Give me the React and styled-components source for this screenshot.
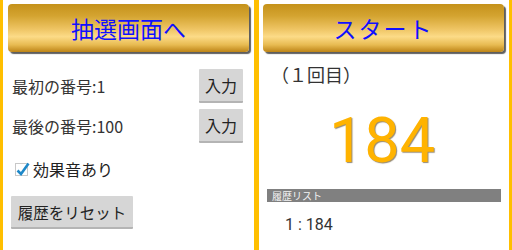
import React from 'react';
import styled, { createGlobalStyle } from 'styled-components';

const GlobalStyle = createGlobalStyle`
  html, body {
    margin: 0;
    padding: 0;
    background: #ffbf00;
  }
  body {
    font-family: Roboto, "Noto Sans CJK JP", sans-serif;
  }
`;

const Screen = styled.div`
  width: 512px;
  height: 250px;
  display: grid;
  grid-template-columns: 251px 250px;
  column-gap: 5px;
  padding: 0 3px;
  box-sizing: border-box;
  background: #ffbf00;
  overflow: hidden;
`;

const Panel = styled.div`
  background: #fff;
  display: flex;
  flex-direction: column;
  align-items: stretch;
  padding: ${(p) => p.$pad};
  box-sizing: border-box;
`;

const GoldButton = styled.button`
  height: 48px;
  border: none;
  border-radius: 4px;
  margin: 0;
  background: linear-gradient(
    to bottom,
    #c5921a 0%,
    #d4a431 25%,
    #eec463 52%,
    #fcdb87 68%,
    #e8bb52 85%,
    #bd8416 100%
  );
  box-shadow: 2px 2px 1px rgba(40, 40, 40, 0.75);
  color: #1010ff;
  font-family: "Noto Sans CJK JP", sans-serif;
  font-size: 23px;
  letter-spacing: ${(p) => p.$spacing || '0'};
  padding: 0;
  cursor: pointer;
`;

const Row = styled.div`
  display: flex;
  align-items: center;
  justify-content: space-between;
  height: 34px;
  margin-top: ${(p) => p.$top};
  padding: 0 6px 0 4px;
`;

const Label = styled.span`
  font-family: "Noto Sans CJK JP", sans-serif;
  font-size: 16px;
  color: #333;
`;

const GrayButton = styled.button`
  height: ${(p) => p.$h || '34px'};
  width: ${(p) => p.$w || '44px'};
  background: #d6d6d6;
  border: none;
  border-bottom: 2px solid #b4b4b4;
  border-radius: 1px;
  padding: 0;
  white-space: nowrap;
  font-family: "Noto Sans CJK JP", sans-serif;
  font-size: ${(p) => p.$fs || '16px'};
  color: #222;
  box-sizing: border-box;
`;

const CheckRow = styled.label`
  display: flex;
  align-items: center;
  gap: 5px;
  margin: 14px 0 0 7px;
  font-family: "Noto Sans CJK JP", sans-serif;
  font-size: 16px;
  color: #222;
`;

const Box = styled.span`
  width: 13px;
  height: 13px;
  border: 1px solid #c8c8c8;
  box-sizing: border-box;
  background: #fff;
  position: relative;
  display: inline-block;
`;

const Tick = styled.svg`
  position: absolute;
  left: 0;
  top: -3px;
`;

const ResetWrap = styled.div`
  margin: 15px 0 0 3px;
`;

const Count = styled.div`
  margin: 9px 0 0 8px;
  font-family: "Noto Sans CJK JP", sans-serif;
  font-size: 18px;
  color: #333;
`;

const BigNumber = styled.div`
  text-align: center;
  font-family: Roboto, sans-serif;
  font-size: 63px;
  line-height: 64px;
  color: #ffb300;
  margin-top: 22px;
  text-shadow: 1px 1px 1px rgba(60, 40, 0, 0.55);
  padding-right: 3px;
`;

const HistoryBar = styled.div`
  margin: 16px 3px 0 4px;
  height: 13px;
  background: #808080;
  color: #f4f4f4;
  font-family: "Noto Sans CJK JP", sans-serif;
  font-size: 10px;
  line-height: 13px;
  padding-left: 5px;
`;

const HistoryItem = styled.div`
  margin: 13px 0 0 22px;
  font-family: Roboto, sans-serif;
  font-size: 16px;
  color: #333;
`;

export default function App() {
  return (
    <>
      <GlobalStyle />
      <Screen>
        <Panel $pad="4px 5px 0 5px">
          <GoldButton>抽選画面へ</GoldButton>
          <Row $top="17px">
            <Label>最初の番号:1</Label>
            <GrayButton>入力</GrayButton>
          </Row>
          <Row $top="6px">
            <Label>最後の番号:100</Label>
            <GrayButton>入力</GrayButton>
          </Row>
          <CheckRow>
            <Box>
              <Tick width="14" height="16" viewBox="0 0 14 16">
                <path d="M1.5 9.5 L5 13 L12.5 2.5" fill="none" stroke="#1e88c8" strokeWidth="2.6" />
              </Tick>
            </Box>
            効果音あり
          </CheckRow>
          <ResetWrap>
            <GrayButton $h="33px" $w="122px" $fs="15.5px">履歴をリセット</GrayButton>
          </ResetWrap>
        </Panel>
        <Panel $pad="4px 5px 0 4px">
          <GoldButton $spacing="2px">スタート</GoldButton>
          <Count>（１回目）</Count>
          <BigNumber>184</BigNumber>
          <HistoryBar>履歴リスト</HistoryBar>
          <HistoryItem>1 : 184</HistoryItem>
        </Panel>
      </Screen>
    </>
  );
}
